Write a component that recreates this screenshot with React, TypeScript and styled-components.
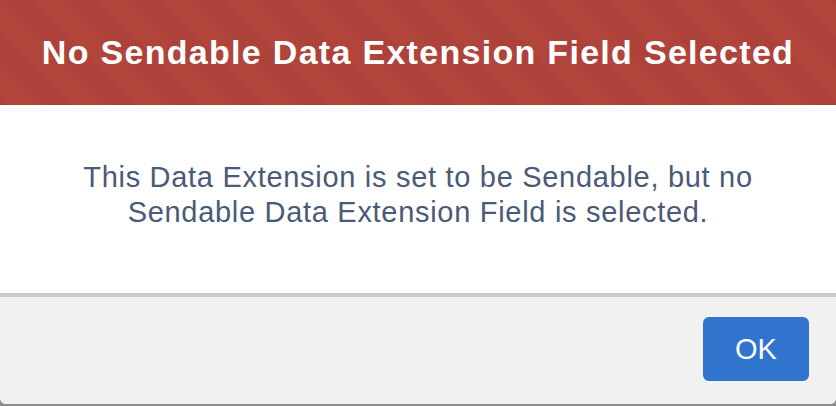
import React from "react"
import styled, { createGlobalStyle } from "styled-components"

const GlobalStyle = createGlobalStyle`
  html, body {
    margin: 0;
    padding: 0;
    background: #8d8d8d;
    font-family: "Liberation Sans", Arial, Helvetica, sans-serif;
  }
`

const Backdrop = styled.div`
  width: 836px;
  height: 406px;
  overflow: hidden;
`

const Modal = styled.section`
  display: flex;
  flex-direction: column;
  height: 404px;
  background: #ffffff;
  border-radius: 0 0 6px 6px;
  overflow: hidden;
`

// error header with the diagonal alert texture
const Header = styled.header`
  display: flex;
  align-items: center;
  justify-content: center;
  height: 105px;
  flex-shrink: 0;
  background-color: #b1443b;
  background-image: linear-gradient(
    45deg,
    rgba(0, 0, 0, 0.025) 25%,
    transparent 25%,
    transparent 50%,
    rgba(0, 0, 0, 0.025) 50%,
    rgba(0, 0, 0, 0.025) 75%,
    transparent 75%,
    transparent
  );
  background-size: 64px 64px;
`

const Title = styled.h2`
  margin: 0;
  color: #ffffff;
  font-size: 34px;
  font-weight: 700;
  letter-spacing: 1.3px;
  white-space: nowrap;
`

const Body = styled.div`
  flex: 1;
  display: flex;
  align-items: center;
  justify-content: center;
  padding: 0 40px 8px;
`

const Message = styled.p`
  margin: 0;
  max-width: 720px;
  text-align: center;
  color: #4a5a78;
  font-size: 29px;
  line-height: 35px;
  letter-spacing: 0.7px;
`

const Footer = styled.footer`
  display: flex;
  align-items: center;
  justify-content: flex-end;
  flex-shrink: 0;
  box-sizing: border-box;
  height: 111px;
  padding: 0 27px 3px;
  border-top: 4px solid #c9c9c9;
  background: #f1f1f1;
`

const Button = styled.button`
  width: 106px;
  height: 64px;
  border: none;
  border-radius: 6px;
  background: #3174cd;
  color: #ffffff;
  font-family: inherit;
  font-size: 29px;
  cursor: pointer;
`

export default function App() {
  return (
    <>
      <GlobalStyle />
      <Backdrop>
        <Modal role="alertdialog">
          <Header>
            <Title>No Sendable Data Extension Field Selected</Title>
          </Header>
          <Body>
            <Message>
              This Data Extension is set to be Sendable, but no
              <br />
              Sendable Data Extension Field is selected.
            </Message>
          </Body>
          <Footer>
            <Button>OK</Button>
          </Footer>
        </Modal>
      </Backdrop>
    </>
  )
}
